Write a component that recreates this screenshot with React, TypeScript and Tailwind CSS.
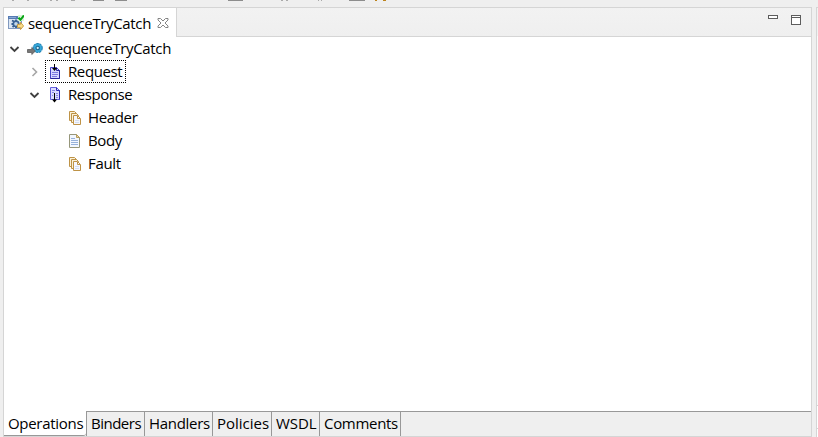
import type { ReactNode } from 'react';

const font = "font-['Open_Sans','Noto_Sans_CJK_KR',sans-serif] text-[15px] leading-[23px] text-black whitespace-nowrap";

function Chevron({ open }: { open: boolean }) {
  return (
    <svg width="12" height="12" viewBox="0 0 12 12" fill="none" className="shrink-0">
      {open ? (
        <path d="M1.5 4l4 4 4-4" stroke="#404040" strokeWidth="1.8" />
      ) : (
        <path d="M3.5 2l4 4-4 4" stroke="#a6a6a6" strokeWidth="1.6" />
      )}
    </svg>
  );
}

function SequenceIcon() {
  return (
    <svg width="16" height="16" viewBox="0 0 16 16" className="shrink-0">
      <rect x=".5" y="1.5" width="13" height="12" fill="#dce7f4" stroke="#8199bf" />
      <path d="M0 1h11v3H0z" fill="#567bb3" />
      <path d="M1 2.5h7" stroke="#89a8d5" />
      <path d="M4 5.5l2 1M3.5 9h2M4.5 12l2-1.5M8 4.5v2M8 11v2" stroke="#315b8d" strokeWidth="1.8" />
      <circle cx="8" cy="8.8" r="2.7" fill="#c4d9ec" stroke="#3a6496" strokeWidth="1.7" />
      <path d="M10 0h6v6h-6z" fill="#dcf5d9" />
      <path d="M10.5 2.8l2 2L16 .4" fill="none" stroke="#08a516" strokeWidth="2.1" />
      <path d="M9.5 9.3h3V7.3l3.1 3.6-3.1 3.7v-2h-3z" fill="#f9dc89" stroke="#c7983b" strokeWidth=".9" />
    </svg>
  );
}

function GearIcon() {
  return (
    <svg width="16" height="14" viewBox="0 0 16 14" className="shrink-0">
      <circle cx="10.7" cy="6" r="4.5" fill="#2b9bcf" stroke="#2584b5" strokeWidth="1.2" strokeDasharray="2.5 .7" />
      <circle cx="10.7" cy="6" r="3.9" fill="#36a8da" />
      <circle cx="10.7" cy="6" r="1.7" fill="#d0edf9" stroke="#19648d" strokeWidth="1.1" />
      <path d="M.5 7.5h4.3V5.5l3.6 3.5-3.6 3.5v-2H.5z" fill="#777" stroke="#5c5c5c" strokeWidth=".8" />
    </svg>
  );
}

function MessageIcon({ response = false }: { response?: boolean }) {
  return (
    <svg width="12" height="16" viewBox="0 0 12 16" className="shrink-0">
      {response ? (
        <>
          <path d="M1.5.5h6l3 3v9h-9z" fill="#dcdcff" stroke="#6662df" />
          <path d="M7.5.5v3h3v9" fill="none" stroke="#2f2ab5" />
          <path d="M3 3.5h3M3 5.5h2M7 6.5h2M7 8.5h2M3 8.5h1M7 10.5h2" stroke="#8a87e6" />
          <path d="M5.5 6v9" stroke="#000" />
          <path d="M3 12.5h5l-2.5 3z" fill="#000" />
        </>
      ) : (
        <>
          <path d="M1.5 3.5h6l3 3v8h-9z" fill="#d8d8ff" stroke="#4541c5" />
          <path d="M7.5 3.5v3h3v8h-9" fill="none" stroke="#29249c" />
          <path d="M3 8.5h6M3 10.5h6M3 12.5h5" fill="none" stroke="#7e7be0" />
          <path d="M5.5 0v6" stroke="#000" />
          <path d="M3 4h5L5.5 7z" fill="#000" />
        </>
      )}
    </svg>
  );
}

function CopiesIcon() {
  return (
    <svg width="14" height="16" viewBox="0 0 14 16" fill="#faf1d9" stroke="#be9347" className="shrink-0">
      <path d="M1.5 1.5h5l2 2v7h-7z" />
      <path d="M3.5 3.5h5l2 2v7h-7z" />
      <path d="M5.5 5.5h4l3 3v6h-7z" fill="#f5f7ff" />
      <path d="M9.5 6v2.5H12" fill="none" />
      <path d="M7 10.5h4M7 12.5h4" stroke="#d5dff0" />
    </svg>
  );
}

function PageIcon() {
  return (
    <svg width="14" height="16" viewBox="0 0 14 16" className="shrink-0">
      <path d="M1.5 1.5h7l3 3v10h-10z" fill="#f2f7ff" stroke="#96967a" />
      <path d="M8.5 1.5v3h3z" fill="#eddca8" stroke="#b79c5c" />
      <path d="M3 5.5h4M3 7.5h7M3 9.5h7M3 11.5h7" stroke="#96b1da" />
    </svg>
  );
}

function Leaf({ icon, label }: { icon: ReactNode; label: string }) {
  return (
    <div className="flex h-[23px] items-center pl-16">
      {icon}
      <span className="ml-1.5 tracking-[-0.35px]">{label}</span>
    </div>
  );
}

const tabs = [
  { label: 'Binders', box: 'w-[58px] tracking-[-0.5px]' },
  { label: 'Handlers', box: 'w-[68px] tracking-[-0.3px]' },
  { label: 'Policies', box: 'w-[59px]' },
  { label: 'WSDL', box: 'w-[48px] tracking-[-0.1px]' },
  { label: 'Comments', box: 'w-[81px] tracking-[-0.3px]' },
];

export default function App() {
  return (
    <div className={`flex h-[437px] w-[818px] flex-col overflow-hidden bg-[#efefef] ${font}`}>
      <div className="h-[7px] shrink-0">
        <svg width="818" height="1" viewBox="0 0 818 1" className="block">
          <path d="M93 0h11M115 0h12M228 0h15M349 0h16" stroke="#8d8d8d" strokeWidth="2" />
          <path d="M12 0h2M27 0h2M50 0h2M56 0h2M71 0h4M281 0h2M286 0h2M318 0h1M321 0h1" stroke="#aaa" strokeWidth="2" />
          <path d="M375 0h2M383 0h3" stroke="#bd831c" strokeWidth="2" />
        </svg>
      </div>
      <div className="flex h-[430px] pl-[3px]">
        <main className="flex w-[809px] shrink-0 flex-col border border-[#d5d5d5] bg-white">
          <header className="flex h-[29px] shrink-0">
            <div className="flex w-[173px] items-center border-r border-[#d5d5d5] bg-white pl-1">
              <SequenceIcon />
              <span className="mt-0.5 ml-1 w-[124px] tracking-[-0.35px]">sequenceTryCatch</span>
              <svg width="12" height="12" viewBox="0 0 12 12" className="ml-[5px]">
                <path d="M1 1.5h2.5L6 4l2.5-2.5H11V3L8 6l3 3v1.5H8.5L6 8l-2.5 2.5H1V9l3-3-3-3z" fill="white" stroke="#777" strokeWidth=".9" />
              </svg>
            </div>
            <div className="flex flex-1 items-start justify-end gap-[13px] border-b border-[#d5d5d5] bg-linear-to-b from-[#f2f2f2] to-[#efefef] pr-2.5 pt-[7px]">
              <div className="h-1 w-2.5 border border-[#5d5d5d] bg-white" />
              <div className="h-2.5 w-2.5 border border-[#5d5d5d] bg-white pt-px">
                <div className="h-px bg-[#5d5d5d]" />
              </div>
            </div>
          </header>
          <section className="h-[374px] shrink-0">
            <div className="flex h-[23px] items-center pl-[5px]">
              <Chevron open />
              <span className="ml-1.5 flex"><GearIcon /></span>
              <span className="ml-[5px] tracking-[-0.35px]">sequenceTryCatch</span>
            </div>
            <div className="flex h-[23px] items-center pl-[25px]">
              <Chevron open={false} />
              <div className="ml-1 flex h-[23px] w-[81px] items-center border border-dotted border-black pl-[3px]">
                <MessageIcon />
                <span className="ml-[7px] tracking-[-0.4px]">Request</span>
              </div>
            </div>
            <div className="flex h-[23px] items-center pl-[25px]">
              <Chevron open />
              <span className="ml-2 flex"><MessageIcon response /></span>
              <span className="ml-[7px] tracking-[-0.45px]">Response</span>
            </div>
            <Leaf icon={<CopiesIcon />} label="Header" />
            <Leaf icon={<PageIcon />} label="Body" />
            <Leaf icon={<CopiesIcon />} label="Fault" />
          </section>
          <footer className="flex h-[25px] shrink-0 bg-[#efefef]">
            <div className="h-[25px] w-[82px] rounded-br-[3px] border-b border-[#989898] bg-white pt-px pl-1 tracking-[-0.3px]">Operations</div>
            <div className="flex flex-1 border-t border-l border-[#989898]">
              {tabs.map((tab) => (
                <div key={tab.label} className={`flex items-start border-r border-[#989898] pl-1 ${tab.box}`}>{tab.label}</div>
              ))}
            </div>
          </footer>
        </main>
        <aside className="ml-1 flex h-[430px] w-0.5 flex-col border-t border-l border-[#d5d5d5]">
          <div className="h-7 bg-[#f2f2f2]" />
          <div className="h-[369px] bg-[#fafafa]" />
          <div className="h-6 border-y border-[#d5d5d5] bg-white" />
          <div className="flex-1 bg-white" />
        </aside>
      </div>
    </div>
  );
}
